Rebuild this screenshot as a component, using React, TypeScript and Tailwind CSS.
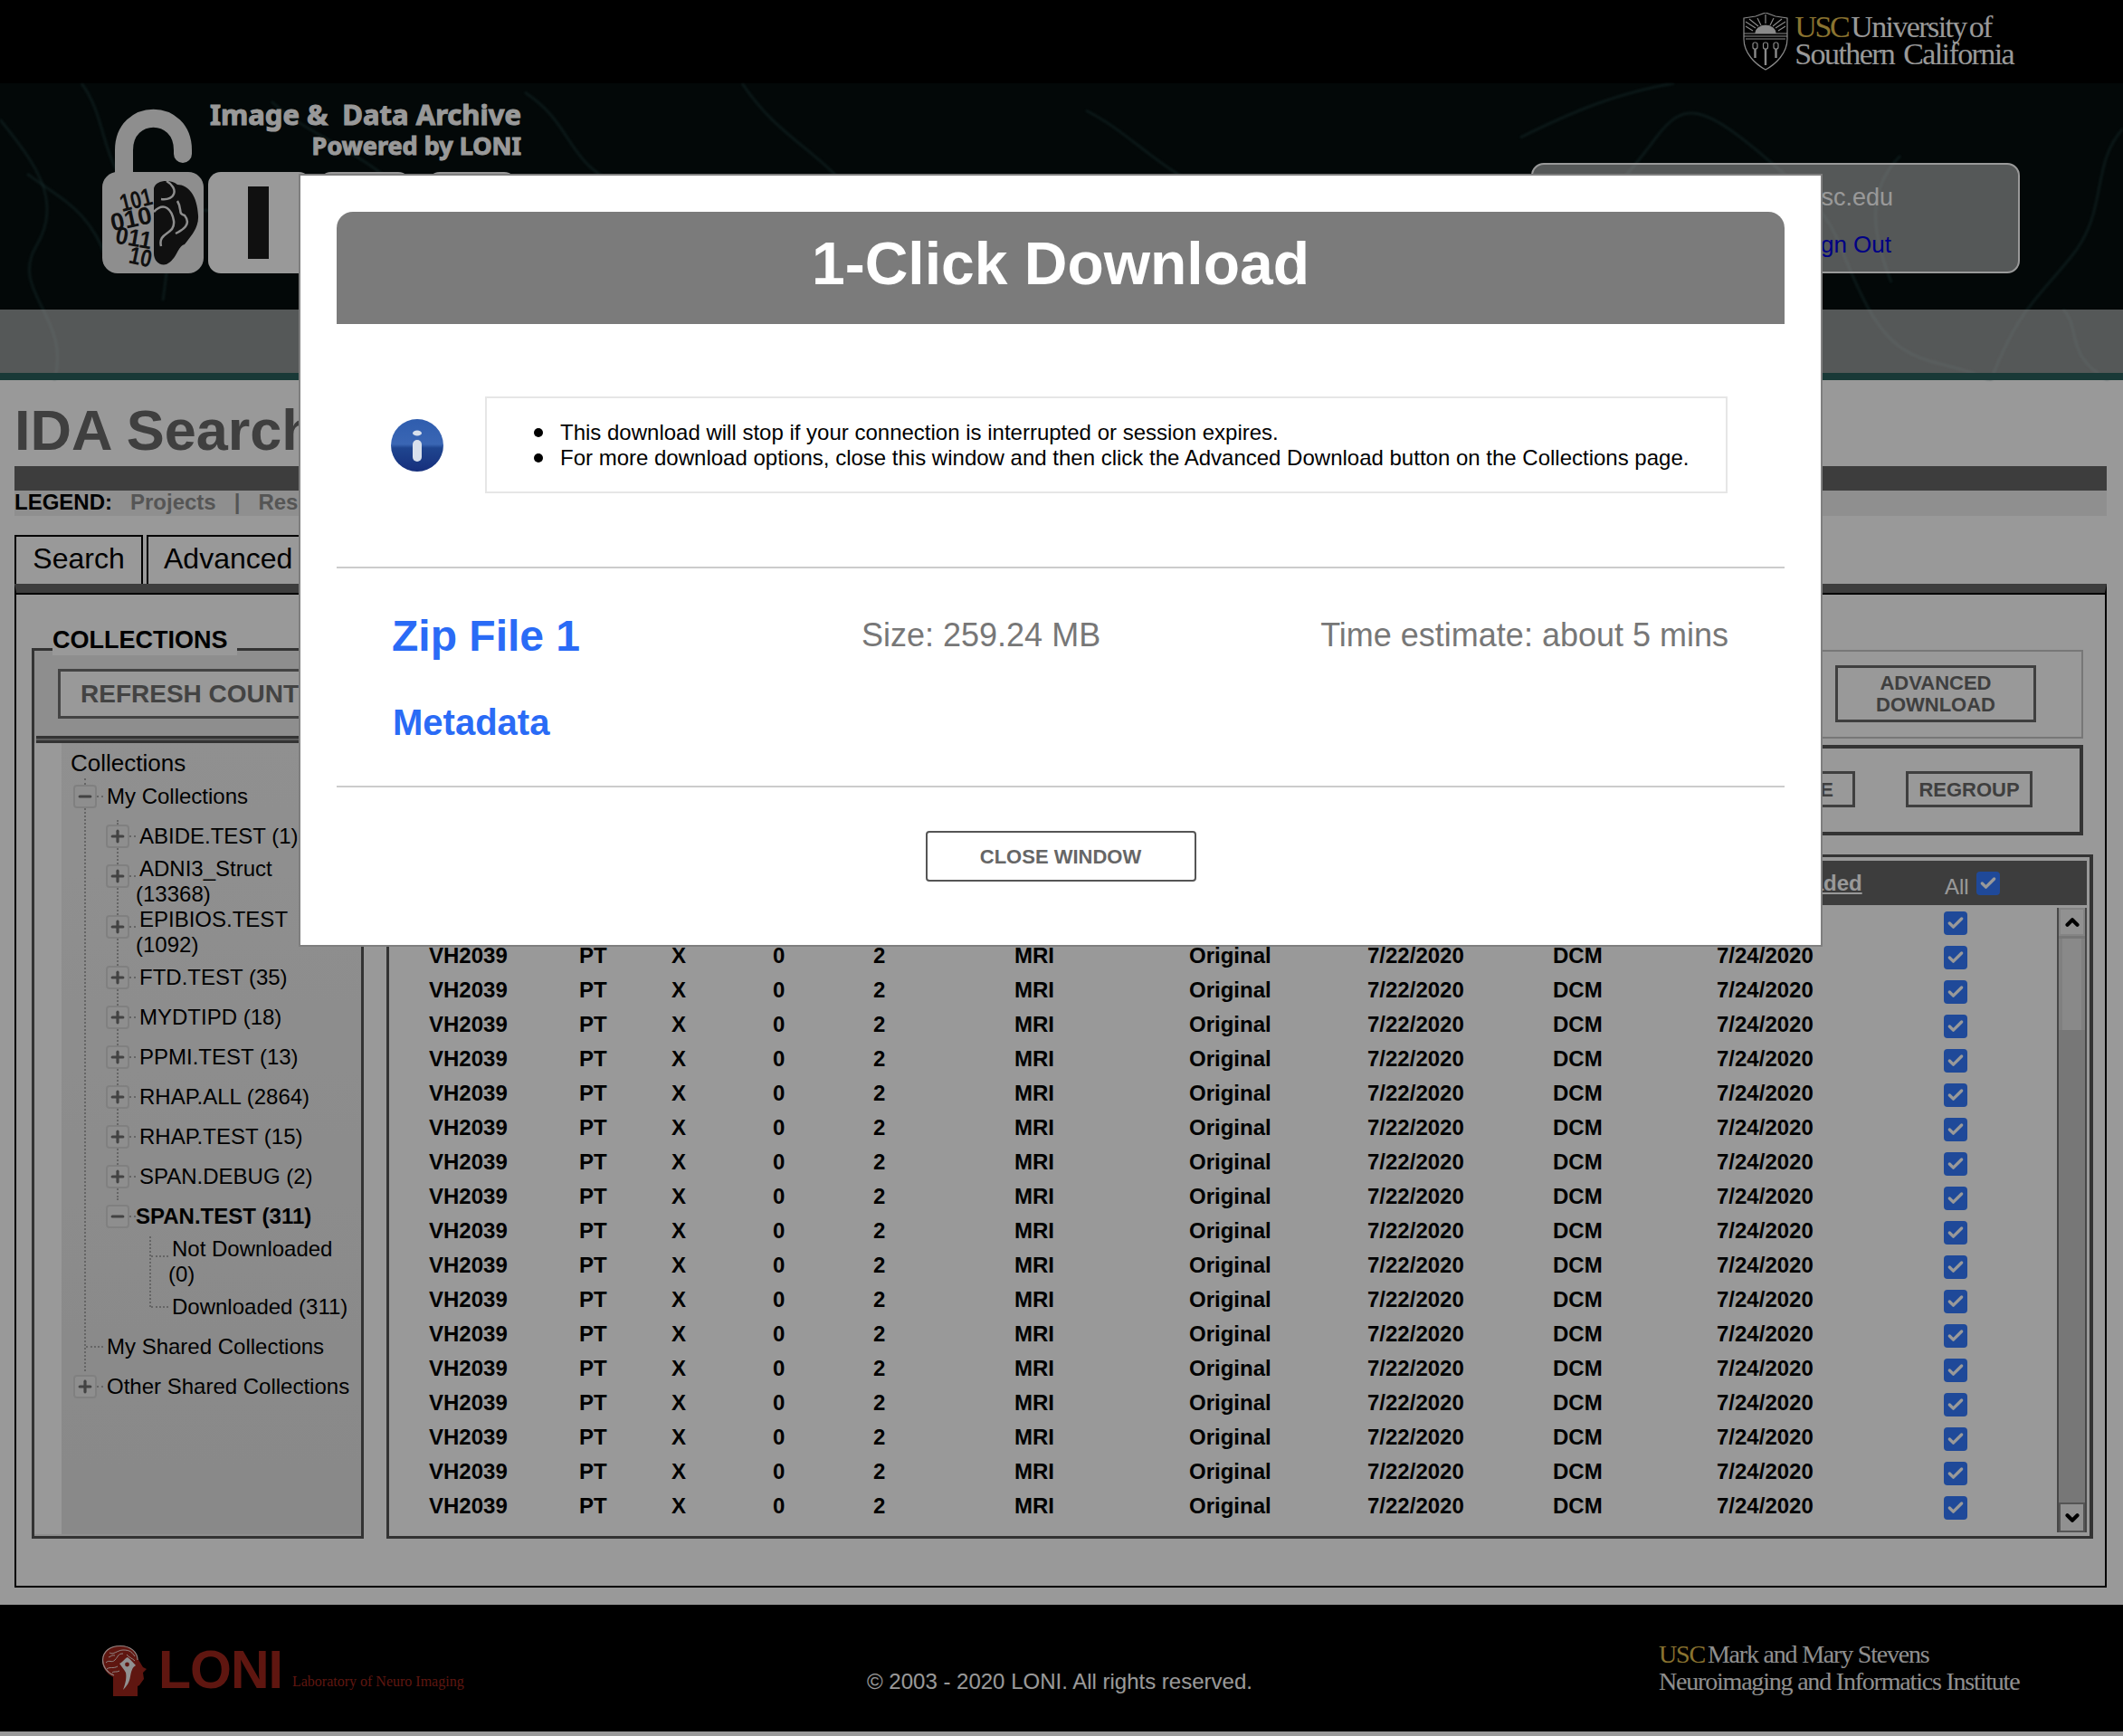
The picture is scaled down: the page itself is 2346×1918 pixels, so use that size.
import React from "react";
import { ChevronDown, ChevronUp, Minus, Plus, Check } from "lucide-react";

function Texture() {
  const d = [
    "M0 40 C40 90 70 130 40 180 S80 260 60 328",
    "M30 100 C70 130 100 140 120 200",
    "M90 0 C120 40 110 90 150 120 S190 170 180 240",
    "M190 150 C240 120 270 170 300 150",
    "M300 20 C340 60 420 80 460 140 S520 220 600 320",
    "M580 10 C640 50 620 90 700 120 S820 180 800 328",
    "M820 0 C860 60 900 70 950 130 S1020 220 1100 320",
    "M1200 30 C1260 60 1300 120 1380 130 S1500 200 1480 328",
    "M1680 60 C1740 30 1790 10 1850 0",
    "M1700 190 C1760 150 1800 100 1830 60 S1880 20 1960 90 S2020 160 2060 240 S2140 300 2200 328",
    "M1750 190 C1800 160 1860 150 1900 170 S1940 220 1960 260",
    "M2346 50 C2310 90 2330 140 2290 190 S2230 250 2200 328",
    "M2100 80 C2060 120 2070 170 2090 220",
    "M2280 250 C2300 270 2280 300 2330 328",
  ];
  return (
    <svg className="absolute inset-0 h-full w-full blur-[1px]" viewBox="0 0 2346 328" preserveAspectRatio="none" fill="none">
      {d.map((p, i) => (
        <path key={i} d={p} stroke="#2c5554" strokeWidth={3} opacity={0.38} />
      ))}
    </svg>
  );
}

function IdaLogo() {
  return (
    <svg width="470" height="190" viewBox="0 0 470 190" className="absolute left-[112px] top-[28px]">
      <path d="M25 78 V46 C25 -1 90 -1 90 46 V50" fill="none" stroke="#ededed" strokeWidth="20" strokeLinecap="round" />
      <rect x="1" y="70" width="112" height="112" rx="17" fill="#ededed" />
      <g fill="#1b1b1b" fontFamily="Liberation Sans" fontWeight="700" fontSize="27">
        <text x="20" y="110" textLength="36" lengthAdjust="spacingAndGlyphs" transform="rotate(-14 38 100)">101</text>
        <text x="10" y="131" textLength="46" lengthAdjust="spacingAndGlyphs" transform="rotate(-12 33 122)">010</text>
        <text x="16" y="152" textLength="40" lengthAdjust="spacingAndGlyphs" transform="rotate(10 36 142)">011</text>
        <text x="31" y="173" textLength="25" lengthAdjust="spacingAndGlyphs" transform="rotate(12 43 163)">10</text>
      </g>
      <path d="M58 88 C60 78 78 78 84 84 C96 84 106 96 107 118 C108 132 98 142 92 150 C84 152 84 166 72 172 C64 174 58 168 58 160 Z" fill="#1b1b1b" />
      <path d="M72 80 C86 88 82 102 66 100 M58 114 C70 102 78 112 80 124 C82 140 62 136 66 152 M84 102 C90 112 84 116 92 118 C100 128 90 134 82 138" fill="none" stroke="#ededed" strokeWidth="2.5" />
      <rect x="118" y="70" width="114" height="112" rx="14" fill="#ffffff" />
      <rect x="162" y="86" width="23" height="80" fill="#1b1b1b" />
      <rect x="240" y="70" width="102" height="112" rx="14" fill="#ffffff" />
      <rect x="360" y="70" width="99" height="112" rx="14" fill="#ffffff" />
    </svg>
  );
}

function UscShield() {
  return (
    <svg width="50" height="64" viewBox="0 0 50 64" fill="none" stroke="#ffffff" strokeWidth="1.2" className="shrink-0 opacity-90">
      <path d="M1 6 L14 4 L25 0 L36 4 L49 6 V29 C49 45 36 57 25 63 C14 57 1 45 1 29 Z" />
      <path d="M1 23 H49 M1 26 H49 M3 29 H47" />
      <path d="M14 23 A11 9 0 0 1 36 23" fill="#ffffff" />
      <path d="M3 10 L14 17 M3 15 L11 20 M47 10 L36 17 M47 15 L39 20 M25 2 V12 M16 6 L20 14 M34 6 L30 14 M7 7 L17 15 M43 7 L33 15" />
      <rect x="11" y="33" width="5" height="7" rx="2" />
      <rect x="22.5" y="33" width="5" height="7" rx="2" />
      <rect x="34" y="33" width="5" height="7" rx="2" />
      <path d="M13.5 40 V50 M25 40 V58 M36.5 40 V50" strokeWidth="2.4" />
    </svg>
  );
}

function LoniHead() {
  return (
    <svg width="51" height="57" viewBox="0 0 51 57" className="shrink-0">
      <path d="M13 57 V36 C5 32 1 25 1 17 C1 7 10 1 21 1 C32 1 39 8 40 15 L46 25 L50 27 L46 31 L47 38 L42 45 L40 46 V57 Z" fill="#9e261c" />
      <path d="M14 34 C6 31 1.5 24 1.5 17 C2 7 10 1.5 21 1.5 C32 1.5 40 8 40 17" fill="none" stroke="#f0dedb" strokeWidth="1.2" />
      <path d="M5 20 C9 16 11 21 15 17 S18 10 24 10 M6 27 C10 24 13 27 18 24 M9 9 C13 12 18 6 24 6 S33 7 37 13 M28 11 C30 14 34 15 37 18 M8 14 C11 13 12 11 15 12 M12 31 C14 29 17 31 20 29" fill="none" stroke="#f0dedb" strokeWidth="1" />
      <path d="M20 21 C24 19 26 15 29 14 C32 16 36 21 38 23 C34 25 33 30 32 35 C31 42 28 46 24 50 C27 42 28 36 27 31 C25 27 22 24 20 21 Z" fill="#f2f2f2" />
      <circle cx="28.5" cy="22" r="2.4" fill="#9e261c" />
    </svg>
  );
}

function TreeBox({ open }: { open?: boolean }) {
  const Icon = open ? Minus : Plus;
  return (
    <span className="relative flex h-[26px] w-[26px] shrink-0 items-center justify-center rounded-[4px] border-2 border-[#d6d6d6] bg-[#ededed]">
      <Icon size={20} strokeWidth={3.8} color="#707070" />
    </span>
  );
}

function Node({ label, open, bold, leaf, wrapped }: { label: string; open?: boolean; bold?: boolean; leaf?: boolean; wrapped?: boolean }) {
  return (
    <div className="flex min-h-[44px] items-center">
      {leaf ? (
        <span className={`ml-[2px] w-[19px] shrink-0 border-t-2 border-dotted border-[#a8a8a8] ${wrapped ? "mb-[12px]" : ""}`} />
      ) : (
        <span className={`flex shrink-0 items-center ${wrapped ? "mb-[12px]" : ""}`}>
          <TreeBox open={open} />
          <span className="w-[7px] shrink-0 border-t-2 border-dotted border-[#a8a8a8]" />
        </span>
      )}
      <span className={`min-w-0 flex-1 text-[24px] leading-[28px] ${bold ? "font-bold" : "indent-[4px]"}`}>{label}</span>
    </div>
  );
}

function LeafRoot({ label }: { label: string }) {
  return (
    <div className="flex min-h-[44px] items-center">
      <span className="ml-[14px] w-[19px] shrink-0 border-t-2 border-dotted border-[#a8a8a8]" />
      <span className="min-w-0 flex-1 indent-[4px] text-[24px] leading-[28px]">{label}</span>
    </div>
  );
}

function Tick({ className = "" }: { className?: string }) {
  return (
    <span className={`flex h-[26px] w-[26px] items-center justify-center rounded-[4px] bg-[#347bff] ${className}`}>
      <Check size={20} strokeWidth={4} color="#ffffff" />
    </span>
  );
}

const cols = ["VH2039", "PT", "X", "0", "2", "MRI", "Original", "7/22/2020", "DCM", "7/24/2020"];
const rows = Array.from({ length: 18 }, (_, i) => i);
const level2 = ["ABIDE.TEST (1)", "ADNI3_Struct (13368)", "EPIBIOS.TEST (1092)", "FTD.TEST (35)", "MYDTIPD (18)", "PPMI.TEST (13)", "RHAP.ALL (2864)", "RHAP.TEST (15)", "SPAN.DEBUG (2)"];

export default function App() {
  return (
    <div className="relative h-[1918px] w-[2346px] overflow-hidden bg-white font-['Liberation_Sans',sans-serif] text-black">
      {/* top bar */}
      <div className="flex h-[92px] items-center justify-end bg-black pr-[121px]">
        <div className="flex items-center gap-[7px]">
          <UscShield />
          <div className="pb-[2px] font-['Liberation_Serif',serif] text-[34px] leading-[30px] tracking-[-1.6px] text-white">
            <div className="[word-spacing:-4px]"><span className="tracking-[-2.4px] text-[#e6c150]">USC</span><span className="ml-[3px]">University of</span></div>
            <div className="[word-spacing:3px]">Southern California</div>
          </div>
        </div>
      </div>

      {/* header */}
      <div className="relative h-[328px] bg-[#050e0e]">
        <Texture />
        <IdaLogo />
        <div className="absolute left-[200px] top-[15px] w-[376px] text-right font-['Noto_Sans',sans-serif] font-bold text-white [-webkit-text-stroke:1px_#ffffff]">
          <div className="text-[31px] leading-[38px] whitespace-pre">Image &amp;  Data Archive</div>
          <div className="text-[27px] leading-[32px]">Powered by LONI</div>
        </div>
        <div className="absolute left-[1692px] top-[88px] flex h-[122px] w-[540px] flex-col items-end rounded-[14px] border-2 border-white bg-white/55 pr-[138px]">
          <div className="mt-[21px] text-[27px] leading-[30px] text-white">username@usc.edu</div>
          <div className="mt-[22px] pr-[2px] text-[26px] leading-[30px] text-[#0000dd]">Sign Out</div>
        </div>
        <div className="absolute bottom-0 h-[78px] w-full border-b-[8px] border-[#2b605d] bg-white/55" />
      </div>

      {/* main */}
      <div className="h-[1353px] bg-white px-[16px]">
        <div className="h-[95px] pt-[19px] text-[63px] font-bold leading-[72px] text-[#696969]">IDA Search</div>
        <div className="h-[27px] w-[2312px] bg-[#666666]" />
        <div className="flex h-[28px] w-[2312px] items-center bg-[#eeeeee] pb-[2px] text-[24px] font-bold">
          <span>LEGEND:</span>
          <span className="ml-[20px] text-[#8e8e8e]">Projects</span>
          <span className="ml-[20px] text-[#8e8e8e]">|</span>
          <span className="ml-[20px] text-[#8e8e8e]">Resources</span>
        </div>
        <div className="mt-[21px] flex h-[54px] gap-[4px] text-[32px]">
          <div className="flex w-[142px] items-center justify-center border-2 border-b-0 border-black pb-[5px]">Search</div>
          <div className="flex w-[180px] items-center border-2 border-b-0 border-black pb-[5px] pl-[17px]">Advanced</div>
        </div>
        <div className="flex h-[1109px] w-[2312px] gap-[25px] border-x-2 border-b-2 border-t-[10px] border-x-black border-b-black border-t-[#666666] pl-[17px] shadow-[inset_0_2px_0_#000000]">
          {/* sidebar */}
          <div className="relative mt-[61px] h-[984px] w-[367px] border-[3px] border-[#555555] bg-[#ededed]">
            <div className="absolute -top-[29px] left-[20px] bg-white pr-[10px] text-[27px] font-bold leading-[34px]">COLLECTIONS</div>
            <div className="ml-[26px] mt-[20px] flex h-[55px] w-[400px] items-center border-[3px] border-[#717171] bg-white pl-[22px] text-[28px] font-bold text-[#717171]">REFRESH COUNT</div>
            <div className="ml-[2px] mt-[19px] h-[8px] border-y-[3px] border-[#555555] bg-[#999999]" />
            <div className="relative flex h-[874px]">
              <div className="w-[30px] bg-white" />
              <div className="w-[331px] bg-gradient-to-b from-[#f0f0f0] to-[#e4e4e4] pl-[10px] pr-[11px]">
                <div className="pt-[7px] text-[26px] leading-[30px]">Collections</div>
                <div className="relative ml-[3px]">
                  <span className="absolute left-[12px] top-[2px] h-[655px] border-l-2 border-dotted border-[#a8a8a8]" />
                  <Node label="My Collections" open />
                  <div className="relative ml-[36px]">
                    <span className="absolute left-[12px] top-[4px] h-[420px] border-l-2 border-dotted border-[#a8a8a8]" />
                    {level2.map((l) => (
                      <Node key={l} label={l} wrapped={l.length > 15} />
                    ))}
                    <Node label="SPAN.TEST (311)" open bold />
                    <div className="relative ml-[48px]">
                      <span className="absolute left-0 top-0 h-[78px] border-l-2 border-dotted border-[#a8a8a8]" />
                      <Node label="Not Downloaded (0)" leaf wrapped />
                      <Node label="Downloaded (311)" leaf />
                    </div>
                  </div>
                  <LeafRoot label="My Shared Collections" />
                  <Node label="Other Shared Collections" />
                </div>
              </div>
            </div>
          </div>

          {/* right column */}
          <div className="mt-[63px] w-[1886px]">
            <div className="flex h-[98px] w-[1875px] items-center justify-end border-2 border-[#c6c6c6] pb-[2px] pr-[50px]">
              <div className="flex h-[63px] w-[222px] items-center justify-center border-[3px] border-[#696969] pt-[2px] text-center text-[22px] font-bold leading-[24px] text-[#696969]">ADVANCED<br />DOWNLOAD</div>
            </div>
            <div className="mt-[7px] flex h-[100px] w-[1875px] items-center justify-end border-4 border-[#555555] pb-[2px] pr-[52px]">
              <div className="flex h-[40px] w-[200px] items-center justify-end border-[3px] border-[#696969] pr-[21px] text-[22px] font-bold text-[#696969]">SAVE</div>
              <div className="ml-[56px] flex h-[40px] w-[140px] items-center justify-center border-[3px] border-[#696969] text-[22px] font-bold text-[#696969]">REGROUP</div>
            </div>
            <div className="mt-[21px] flex h-[756px] w-[1886px] flex-col border-[3px] border-r-4 border-[#555555] py-[4px] pl-[4px] pr-[3px]">
              <div className="relative flex h-[49px] shrink-0 items-center bg-[#666666] text-[24px] font-bold text-white">
                <span className="ml-[1481px] underline">Downloaded</span>
                <span className="absolute left-[1715px] top-[11px] font-normal">All</span>
                <Tick className="absolute left-[1750px] top-[12px]" />
              </div>
              <div className="flex min-h-0 flex-1">
                <div className="-mt-[1px] min-w-0 flex-1 overflow-hidden pl-[40px]">
                  {rows.map((r) => (
                    <div key={r} className="grid h-[38px] grid-cols-[166px_102px_112px_111px_156px_193px_197px_205px_181px_251px_26px] items-center text-[24px] font-bold">
                      {cols.map((c, i) => (
                        <span key={i}>{c}</span>
                      ))}
                      <Tick className="mt-[3px]" />
                    </div>
                  ))}
                </div>
                <div className="mt-[3px] flex w-[33px] shrink-0 flex-col border-x-2 border-[#777777] bg-[#c6c6c6]">
                  <div className="flex h-[31px] shrink-0 items-center justify-center border-2 border-[#dddddd] bg-[#f2f2f2]">
                    <ChevronUp size={22} strokeWidth={4.5} />
                  </div>
                  <div className="mt-[3px] h-[101px] border-x-4 border-[#d6d6d6] bg-[#e4e4e4]" />
                  <div className="mt-auto flex h-[33px] shrink-0 items-center justify-center border-2 border-[#8e8e8e] bg-[#f2f2f2]">
                    <ChevronDown size={22} strokeWidth={4.5} />
                  </div>
                </div>
              </div>
            </div>
          </div>
        </div>
      </div>

      {/* footer */}
      <div className="relative flex h-[140px] items-start bg-black">
        <div className="ml-[112px] mt-[44px] flex items-start">
          <LoniHead />
          <span className="ml-[12px] mt-[-1px] text-[59px] font-bold leading-[58px] tracking-[-1px] text-[#9e261c]">LONI</span>
          <span className="ml-[11px] mt-[30px] font-['Liberation_Serif',serif] text-[16px] leading-[22px] text-[#9e261c]">Laboratory of Neuro Imaging</span>
        </div>
        <div className="absolute left-[958px] top-[71px] text-[24px] leading-[28px] text-white">© 2003 - 2020 LONI. All rights reserved.</div>
        <div className="absolute left-[1833px] top-[40px] font-['Liberation_Serif',serif] text-[28px] leading-[30px] tracking-[-1.2px] text-[#eeeeee]">
          <div><span className="text-[#e6c150]">USC</span><span className="ml-[3px]">Mark and Mary Stevens</span></div>
          <div>Neuroimaging and Informatics Institute</div>
        </div>
      </div>
      <div className="h-[5px] bg-white" />

      {/* dim */}
      <div className="absolute inset-0 bg-black/40" />

      {/* modal */}
      <div className="absolute left-[330px] top-[192px] h-[854px] w-[1684px] border-2 border-[#7f7f7f] bg-white px-[40px] pt-[40px]">
        <div className="flex h-[124px] items-center justify-center rounded-t-[18px] bg-[#7b7b7b] pb-[10px] text-[66px] font-bold text-white">1-Click Download</div>
        <div className="mt-[80px] flex items-center pl-[60px]">
          <svg width="58" height="58" viewBox="0 0 58 58" className="shrink-0">
            <defs>
              <linearGradient id="ig" x1="0" y1="0" x2="0" y2="1">
                <stop offset="0" stopColor="#2f5dae" />
                <stop offset="0.48" stopColor="#3a66b4" />
                <stop offset="0.55" stopColor="#1f458f" />
                <stop offset="1" stopColor="#162f7c" />
              </linearGradient>
            </defs>
            <circle cx="29" cy="29" r="29" fill="url(#ig)" />
            <ellipse cx="29" cy="15.500" rx="5" ry="3" fill="#d8e0ec" />
            <rect x="24" y="23" width="10" height="24" rx="5" fill="#d8e0ec" />
          </svg>
          <div className="ml-[46px] flex h-[107px] w-[1373px] items-center border-2 border-[#e6e6e6]">
            <ul className="pl-[52px] text-[24px] leading-[28px]">
              <li className="flex items-center"><span className="mr-[19px] h-[10px] w-[10px] rounded-full bg-black" />This download will stop if your connection is interrupted or session expires.</li>
              <li className="flex items-center"><span className="mr-[19px] h-[10px] w-[10px] rounded-full bg-black" />For more download options, close this window and then click the Advanced Download button on the Collections page.</li>
            </ul>
          </div>
        </div>
        <div className="mt-[81px] h-[2px] bg-[#cccccc]" />
        <div className="mt-[44px] flex h-[60px] items-center pl-[61px] pr-[62px]">
          <span className="w-[519px] pt-[2px] text-[48px] font-bold text-[#2a6bf6]">Zip File 1</span>
          <span className="text-[36px] text-[#777777]">Size: 259.24 MB</span>
          <span className="ml-auto text-[36px] text-[#777777]">Time estimate: about 5 mins</span>
        </div>
        <div className="ml-[62px] mt-[42px] h-[48px] text-[40px] font-bold leading-[48px] text-[#2a6bf6]">Metadata</div>
        <div className="mt-[46px] h-[2px] bg-[#cccccc]" />
        <div className="mx-auto mt-[48px] flex h-[56px] w-[299px] items-center justify-center rounded-[4px] border-2 border-[#555555] text-[22px] font-bold text-[#666666]">CLOSE WINDOW</div>
      </div>
    </div>
  );
}
